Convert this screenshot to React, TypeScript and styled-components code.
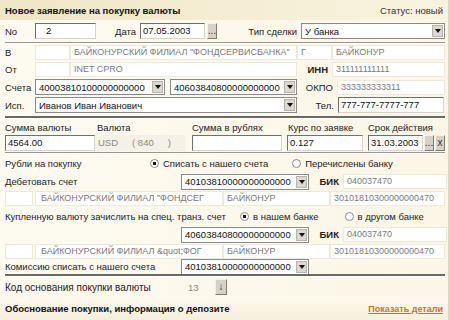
import React from "react";
import styled, { createGlobalStyle } from "styled-components";

const Global = createGlobalStyle`
  html, body {
    margin: 0;
    padding: 0;
    background: #fcf8ec;
  }
  * { box-sizing: border-box; }
`;

const Page = styled.div`
  width: 450px;
  height: 320px;
  overflow: hidden;
  font-family: "Liberation Sans", Arial, sans-serif;
  font-size: 9.5px;
  color: #222;
  background: linear-gradient(90deg, #fdfaf0 0%, #fbf6e6 100%);
  border-right: 2px solid #ddd6c0;
  display: flex;
  flex-direction: column;
`;

const Header = styled.div`
  height: 20px;
  flex-shrink: 0;
  padding: 0 5px 0 5px;
  display: flex;
  align-items: center;
  justify-content: space-between;
  background: linear-gradient(90deg, #efe6c6 0%, #f6efd6 60%, #f9f3e0 100%);
`;

const Title = styled.div`
  font-weight: bold;
  font-size: 9.5px;
  color: #111;
`;

const Status = styled.div`
  color: #333;
`;

const Row = styled.div<{ $h?: number }>`
  height: ${(p) => p.$h ?? 17}px;
  display: flex;
  align-items: center;
  padding: 0 3px 0 5px;
  flex-shrink: 0;
`;

const Label = styled.div<{ $w?: number; $right?: boolean; $bold?: boolean; $big?: boolean }>`
  width: ${(p) => (p.$w ? `${p.$w}px` : "auto")};
  flex-shrink: 0;
  text-align: ${(p) => (p.$right ? "right" : "left")};
  font-weight: ${(p) => (p.$bold ? "bold" : "normal")};
  font-size: ${(p) => (p.$big ? "10px" : "inherit")};
  padding-right: ${(p) => (p.$right ? "4px" : "0")};
  white-space: nowrap;
`;

const Field = styled.div<{ $w: number; $grey?: boolean; $pad?: number; $ml?: number }>`
  width: ${(p) => p.$w}px;
  margin-left: ${(p) => p.$ml ?? 0}px;
  height: 15px;
  flex-shrink: 0;
  background: #fff;
  border: 1px solid #efe9d8;
  color: ${(p) => (p.$grey ? "#7a7a7a" : "#222")};
  font-size: 9px;
  padding: 0 2px 0 ${(p) => p.$pad ?? 3}px;
  line-height: 13px;
  white-space: nowrap;
  overflow: hidden;
`;

const Input = styled.div<{ $w: number; $ml?: number; $indent?: number }>`
  width: ${(p) => p.$w}px;
  margin-left: ${(p) => p.$ml ?? 0}px;
  height: 16px;
  flex-shrink: 0;
  background: #fff;
  border-top: 1px solid #6f6f6f;
  border-left: 1px solid #6f6f6f;
  border-right: 1px solid #d8d4c8;
  border-bottom: 1px solid #d8d4c8;
  padding: 0 2px 0 ${(p) => p.$indent ?? 2}px;
  line-height: 14px;
  color: #111;
  white-space: nowrap;
  overflow: hidden;
`;

const SelectBox = styled.div<{ $w: number; $ml?: number }>`
  width: ${(p) => p.$w}px;
  margin-left: ${(p) => p.$ml ?? 0}px;
  height: 16px;
  flex-shrink: 0;
  background: #fff;
  border: 1px solid #8a8a8a;
  display: flex;
  align-items: center;
  padding: 0 1px 0 3px;
  color: #111;
`;

const SelectText = styled.span`
  flex: 1;
  white-space: nowrap;
  overflow: hidden;
`;

const Arrow = styled.span`
  width: 11px;
  height: 12px;
  flex-shrink: 0;
  background: #dcd8cf;
  border: 1px solid #b8b4aa;
  display: flex;
  align-items: center;
  justify-content: center;
  &::after {
    content: "";
    border-left: 3px solid transparent;
    border-right: 3px solid transparent;
    border-top: 4px solid #111;
  }
`;

const Btn = styled.div<{ $w?: number; $ml?: number }>`
  width: ${(p) => p.$w ?? 10}px;
  height: 16px;
  margin-left: ${(p) => p.$ml ?? 1}px;
  flex-shrink: 0;
  background: #d6d2c6;
  border-top: 1px solid #f4f2ea;
  border-left: 1px solid #f4f2ea;
  border-right: 1px solid #7c7a72;
  border-bottom: 1px solid #7c7a72;
  display: flex;
  align-items: center;
  justify-content: center;
  font-size: 10px;
  line-height: 1;
  color: #333;
`;

const Separator = styled.div<{ $dark?: boolean }>`
  height: ${(p) => (p.$dark ? 3 : 2)}px;
  margin: 0 3px 0 5px;
  flex-shrink: 0;
  border-top: ${(p) => (p.$dark ? "2px solid #6a6a64" : "1px solid #9a988e")};
  border-bottom: 1px solid #fff;
`;

const Gap = styled.div<{ $h: number }>`
  height: ${(p) => p.$h}px;
  flex-shrink: 0;
`;

const Radio = styled.span<{ $on?: boolean }>`
  display: inline-flex;
  align-items: center;
  gap: 4px;
  white-space: nowrap;
  &::before {
    content: "";
    width: 7px;
    height: 7px;
    border-radius: 50%;
    border: 1px solid #8a8a8a;
    background: ${(p) => (p.$on ? "radial-gradient(circle, #111 0 1.6px, #fff 2px)" : "#fff")};
  }
`;

const Spacer = styled.div<{ $w?: number }>`
  width: ${(p) => (p.$w ? `${p.$w}px` : "auto")};
  flex: ${(p) => (p.$w ? "0 0 auto" : "1")};
`;

const CurrencyBox = styled.div`
  width: 90px;
  height: 16px;
  display: flex;
  align-items: center;
  background: #f4f1e6;
  color: #8a8a8a;
  padding-left: 3px;
  gap: 14px;
`;

const Paren = styled.span`
  display: inline-flex;
  span + span {
    margin-left: 14px;
  }
`;

const Code = styled.span`
  width: 34px;
  color: #8a8a8a;
  padding-left: 7px;
  flex-shrink: 0;
`;

const Link = styled.a`
  color: #c47a10;
  text-decoration: underline;
  font-weight: bold;
  font-size: 9px;
  cursor: pointer;
`;

const Footer = styled.div`
  flex: 1;
  display: flex;
  align-items: center;
  justify-content: space-between;
  padding: 0 5px;
  background: linear-gradient(180deg, #fcf8ec 0%, #f6f0dc 100%);
`;

const Select = ({ w, ml, value }: { w: number; ml?: number; value: string }) => (
  <SelectBox $w={w} $ml={ml}>
    <SelectText>{value}</SelectText>
    <Arrow />
  </SelectBox>
);

const BankRow = ({ name, h }: { name: string; h: number }) => (
  <Row $h={h}>
    <Field $w={28} />
    <Field $w={188} $ml={2} $grey $pad={5}>{name}</Field>
    <Field $w={107} $grey>БАЙКОНУР</Field>
    <Field $w={115} $grey>30101810300000000470</Field>
  </Row>
);

const AccountRow = ({ label, value, bik }: { label?: string; value: string; bik?: boolean }) => (
  <>
    <Label $w={176}>{label}</Label>
    <Select w={128} value={value} />
    {bik && (
      <>
        <Label $w={34} $right $bold>БИК</Label>
        <Field $w={104} $grey>040037470</Field>
      </>
    )}
  </>
);

export default function App() {
  return (
    <Page>
      <Global />
      <Header>
        <Title>Новое заявление на покупку валюты</Title>
        <Status>Статус: новый</Status>
      </Header>

      <Row $h={22}>
        <Label $w={30}>No</Label>
        <Input $w={61} $indent={10}>2</Input>
        <Label $w={44} $right>Дата</Label>
        <Input $w={65}>07.05.2003</Input>
        <Btn $ml={2}>...</Btn>
        <Spacer />
        <Label $right>Тип сделки</Label>
        <Select w={144} value="У банка" />
      </Row>
      <Separator />

      <Row>
        <Label $w={30}>В</Label>
        <Field $w={35} />
        <Field $w={227} $grey>БАЙКОНУРСКИЙ ФИЛИАЛ "ФОНДСЕРВИСБАНКА"</Field>
        <Field $w={35} $grey>Г</Field>
        <Field $w={113} $grey>БАЙКОНУР</Field>
      </Row>
      <Row>
        <Label $w={30}>От</Label>
        <Field $w={35} />
        <Field $w={227} $grey>INET CPRO</Field>
        <Label $w={35} $right $bold>ИНН</Label>
        <Field $w={113} $grey>311111111111</Field>
      </Row>
      <Row $h={18}>
        <Label $w={30}>Счета</Label>
        <Select w={130} value="40003810100000000000" />
        <Select w={127} ml={5} value="40603840800000000000" />
        <Label $w={40} $right>ОКПО</Label>
        <Field $w={108} $grey>333333333311</Field>
      </Row>
      <Row $h={18}>
        <Label $w={30}>Исп.</Label>
        <Select w={262} value="Иванов Иван Иванович" />
        <Label $w={41} $right>Тел.</Label>
        <Input $w={106}>777-777-7777-777</Input>
      </Row>
      <Gap $h={2} />
      <Separator $dark />
      <Gap $h={1} />

      <Row $h={14}>
        <Label $w={92}>Сумма валюты</Label>
        <Label $w={95}>Валюта</Label>
        <Label $w={96}>Сумма в рублях</Label>
        <Label $w={80}>Курс по заявке</Label>
        <Label>Срок действия</Label>
      </Row>
      <Row $h={17}>
        <Input $w={90}>4564.00</Input>
        <CurrencyBox>
          <span>USD</span>
          <Paren>
            <span>( 840</span>
            <span>)</span>
          </Paren>
        </CurrencyBox>
        <Input $w={90} $ml={7}>&nbsp;</Input>
        <Input $w={76} $ml={5}>0.127</Input>
        <Input $w={55} $ml={5}>31.03.2003</Input>
        <Btn $ml={1}>...</Btn>
        <Btn $ml={1}>x</Btn>
      </Row>
      <Gap $h={1} />
      <Separator />

      <Row $h={19}>
        <Label $w={145}>Рубли на покупку</Label>
        <Radio $on>Списать с нашего счета</Radio>
        <Spacer $w={24} />
        <Radio>Перечислены банку</Radio>
      </Row>
      <Row $h={17}>
        <AccountRow label="Дебетовать счет" value="40103810000000000000" bik />
      </Row>
      <BankRow h={17} name={'БАЙКОНУРСКИЙ ФИЛИАЛ "ФОНДСЕГ'} />
      <Row $h={19}>
        <Label $w={235}>Купленную валюту зачислить на спец. транз. счет</Label>
        <Radio $on>в нашем банке</Radio>
        <Spacer $w={26} />
        <Radio>в другом банке</Radio>
      </Row>
      <Row $h={17}>
        <AccountRow value="40603840800000000000" bik />
      </Row>
      <BankRow h={16} name={"БАЙКОНУРСКИЙ ФИЛИАЛ &quot;ФОГ"} />
      <Row $h={15}>
        <AccountRow label="Комиссию списать с нашего счета" value="40103810000000000000" />
      </Row>
      <Separator $dark />

      <Row $h={20}>
        <Label $w={176} $big>Код основания покупки валюты</Label>
        <Code>13</Code>
        <Btn $w={12} $ml={0}>↓</Btn>
      </Row>

      <Footer>
        <Title>Обоснование покупки, информация о депозите</Title>
        <Link>Показать детали</Link>
      </Footer>
    </Page>
  );
}
